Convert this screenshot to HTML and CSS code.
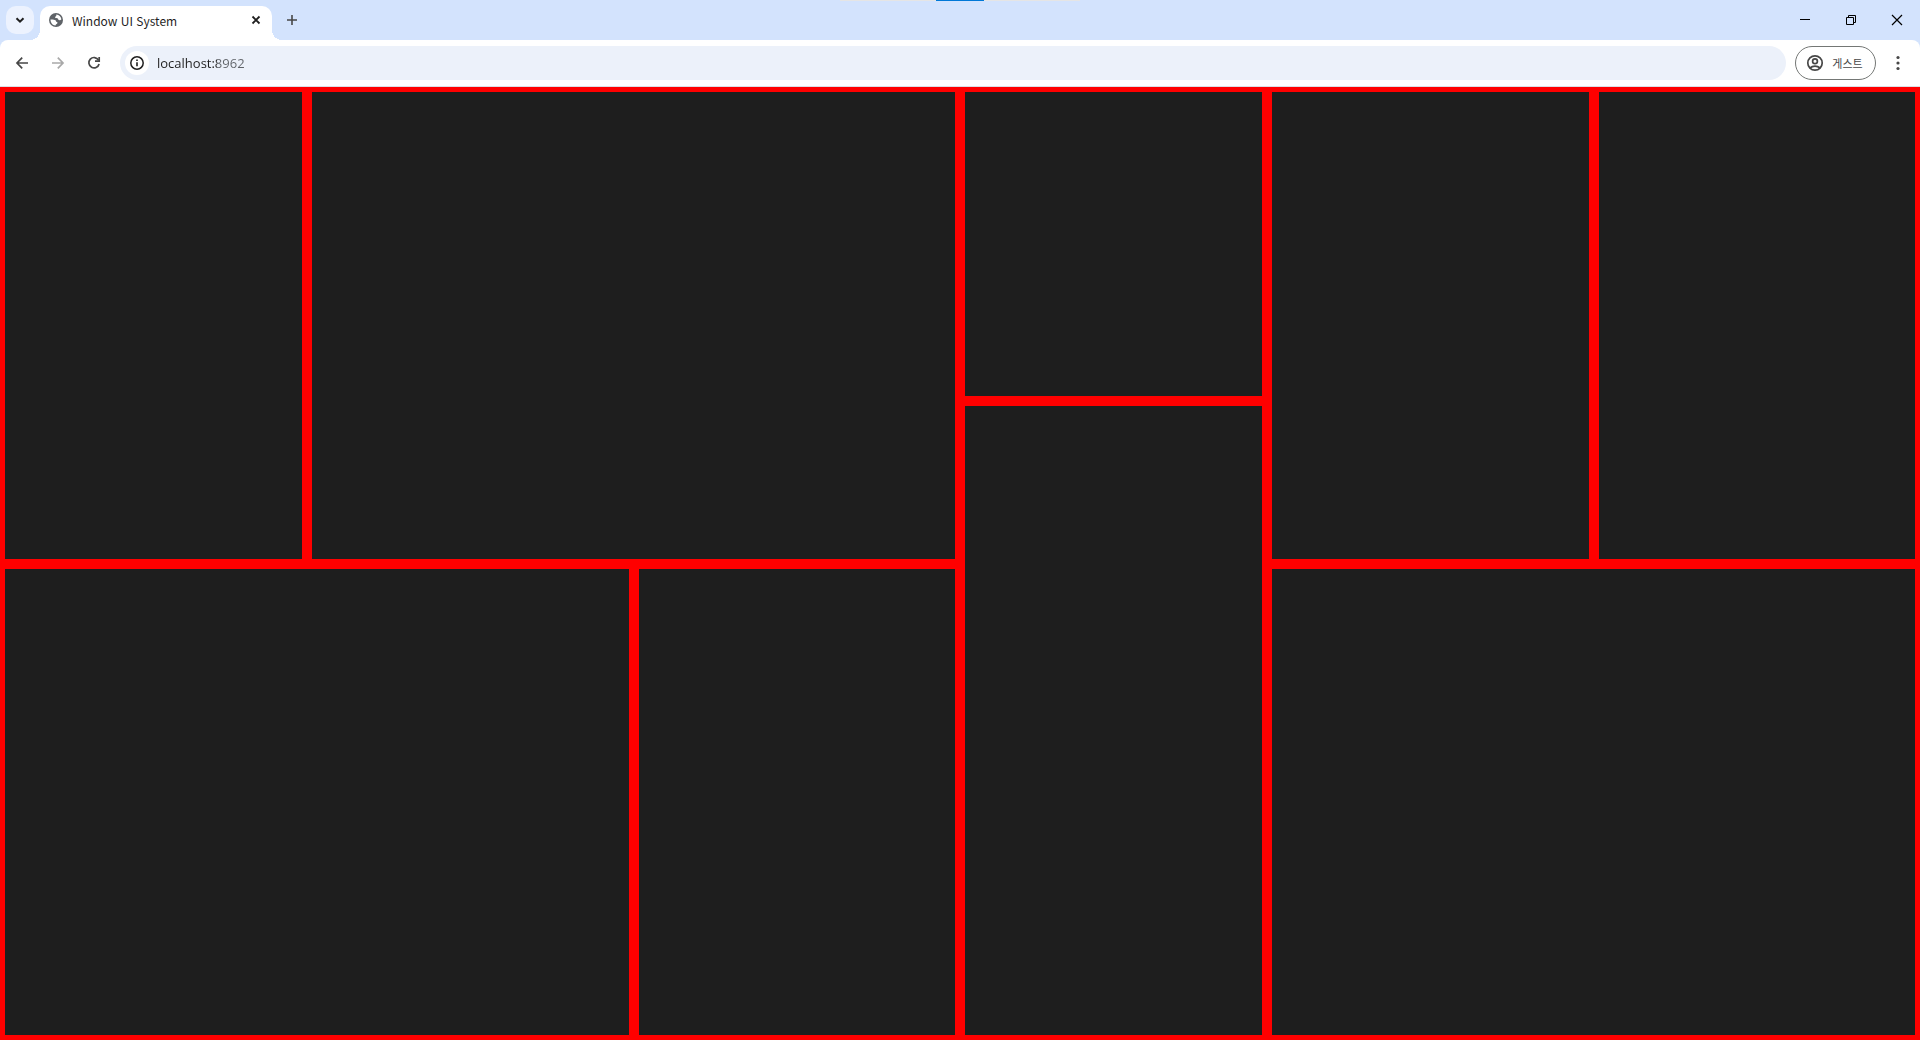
FILE: index.html
```html
<!DOCTYPE html>
<html lang="ko">
<head>
<meta charset="utf-8">
<meta name="viewport" content="width=device-width, initial-scale=1">
<title>Window UI System</title>
<link rel="stylesheet" href="styles.css">
</head>
<body>
<div class="snap-handle" aria-hidden="true"><span class="snap-grip"></span></div>
<header class="browser">
  <div class="tab-strip">
    <button class="tab-search" aria-label="Search tabs"><svg width="12" height="12" viewBox="0 0 12 12"><path d="M2.5 4.2 6 7.7l3.500-3.500" fill="none" stroke="#1f1f1f" stroke-width="2"/></svg></button>
    <div class="tab">
      <svg class="globe" width="16" height="16" viewBox="0 0 16 16"><circle cx="8" cy="8" r="7" fill="#5f6368"/><path d="M8.300 2.500c2.800.2 4.700 2.200 5.100 4.700-.8 1.200-1.900 1.100-2.800.9-.5-.5-.3-1.200-.8-1.500-.9-.5-2.400.1-2.700-1-.2-1 .9-1.100 1.200-1.800.1-.5-.1-.9 0-1.300zM2.500 7.500c1.500-.1 3.900-.1 5 .8.700.7.300 1.500 1.300 1.700.8.200.9.800.4 1.400-.6.700-1.500.6-1.700 2.100-2.900-.2-5-2.700-5-6z" fill="#fff"/></svg>
      <span class="tab-title">Window UI System</span>
      <button class="tab-close" aria-label="Close tab"><svg width="10" height="10" viewBox="0 0 10 10"><path d="m1.500 1.500 7 7m0-7-7 7" stroke="#1f1f1f" stroke-width="1.800"/></svg></button>
    </div>
    <button class="new-tab" aria-label="New tab"><svg width="12" height="12" viewBox="0 0 12 12"><path d="M6 1v10M1 6h10" stroke="#474747" stroke-width="1.600"/></svg></button>
    <div class="window-controls">
      <button class="control" aria-label="Minimize"><svg width="12" height="12" viewBox="0 0 12 12"><path d="M1 5.500h10" stroke="#000"/></svg></button>
      <button class="control" aria-label="Restore"><svg width="12" height="12" viewBox="0 0 12 12"><path d="M1.500 3.500h7v7h-7zM3.500 3.500v-2h7v7h-2" fill="none" stroke="#000"/></svg></button>
      <button class="control" aria-label="Close"><svg width="12" height="12" viewBox="0 0 12 12"><path d="m1 1 10 10m0-10L1 11" stroke="#000" stroke-width="1.200"/></svg></button>
    </div>
  </div>
  <div class="toolbar">
    <nav class="navigation" aria-label="Browser">
      <button class="icon-button" aria-label="Back"><svg width="16" height="16" viewBox="0 0 16 16"><path d="M14 8H3m5.200-5.300L3 8l5.200 5.300" fill="none" stroke="#474747" stroke-width="1.700"/></svg></button>
      <button class="icon-button" aria-label="Forward" disabled><svg width="16" height="16" viewBox="0 0 16 16"><path d="M2 8h11M7.800 2.700 13 8l-5.200 5.300" fill="none" stroke="#a9a9a9" stroke-width="1.700"/></svg></button>
      <button class="icon-button" aria-label="Reload"><svg width="16" height="16" viewBox="0 0 16 16"><path d="M12.500 5A5.200 5.200 0 1 0 13.100 9" fill="none" stroke="#474747" stroke-width="1.700"/><path d="M13.200 2v4.200H9" fill="none" stroke="#474747" stroke-width="1.700"/></svg></button>
    </nav>
    <div class="address">
      <button class="site-info" aria-label="Site information"><svg width="16" height="16" viewBox="0 0 16 16"><circle cx="8" cy="8" r="6.200" fill="none" stroke="#1f1f1f" stroke-width="1.500"/><path d="M8 7.200v4M8 4.500V6" stroke="#1f1f1f" stroke-width="1.600"/></svg></button>
      <input class="url" type="text" value="localhost:8962" aria-label="Address" spellcheck="false">
    </div>
    <button class="profile"><svg width="18" height="18" viewBox="0 0 18 18"><g fill="none" stroke="#474747" stroke-width="1.700"><circle cx="9" cy="9" r="7.200"/><circle cx="9" cy="7.300" r="2.400"/><path d="M4 14c2.700-2.400 7.300-2.400 10 0"/></g></svg><span>게스트</span></button>
    <button class="menu" aria-label="Menu"><svg width="4" height="16" viewBox="0 0 4 16"><g fill="#474747"><circle cx="2" cy="2.500" r="1.600"/><circle cx="2" cy="8" r="1.600"/><circle cx="2" cy="13.500" r="1.600"/></g></svg></button>
  </div>
</header>
<main class="workspace">
  <div class="rows">
    <div class="columns narrow-wide">
      <section class="pane"></section>
      <section class="pane"></section>
    </div>
    <div class="columns wide-narrow">
      <section class="pane"></section>
      <section class="pane"></section>
    </div>
  </div>
  <div class="columns narrow-wide">
    <div class="rows short-tall">
      <section class="pane"></section>
      <section class="pane"></section>
    </div>
    <div class="rows">
      <div class="columns">
        <section class="pane"></section>
        <section class="pane"></section>
      </div>
      <section class="pane"></section>
    </div>
  </div>
</main>
</body>
</html>
```

FILE: styles.css
```css
* { box-sizing: border-box; }

body {
  display: grid;
  grid-template-rows: auto minmax(0, 1fr);
  grid-template-columns: minmax(0, 1fr);
  height: 100vh;
  margin: 0;
  background: #d3e3fd;
  font-family: "Noto Sans CJK KR", "Noto Sans", sans-serif;
  font-size: 12px;
  color: #1f1f1f;
}

button {
  display: flex;
  align-items: center;
  justify-content: center;
  flex: none;
  padding: 0;
  border: 0;
  background: transparent;
  font: inherit;
  color: inherit;
}

svg { display: block; flex: none; }

/* Thin handle over the top edge of the window */
.snap-handle {
  position: absolute;
  top: 0;
  left: 50%;
  display: flex;
  justify-content: center;
  width: 240px;
  height: 1px;
  background: #e5e5e5;
  transform: translateX(-50%);
}

.snap-grip { width: 48px; background: #0078d7; }

/* Tabs */
.tab-strip {
  display: flex;
  align-items: flex-start;
  height: 40px;
  padding: 6px 0 0 6px;
}

.tab-search {
  width: 28px;
  height: 28px;
  border-radius: 10px;
  background: #ecf2fe;
}

.tab {
  position: relative;
  display: flex;
  align-items: center;
  width: 232px;
  height: 34px;
  margin-left: 6px;
  padding: 0 8px 6px;
  border-radius: 10px 10px 0 0;
  background: #fff;
}

.tab::before,
.tab::after {
  content: "";
  position: absolute;
  bottom: 0;
  width: 10px;
  height: 10px;
}

.tab::before {
  right: 100%;
  background: radial-gradient(circle at 0 0, transparent 10px, #fff 10px);
}

.tab::after {
  left: 100%;
  background: radial-gradient(circle at 100% 0, transparent 10px, #fff 10px);
}

.tab-title {
  flex: 1;
  margin-left: 8px;
  padding-top: 2px;
  line-height: 20px;
}

.tab-close { width: 16px; height: 16px; }

.new-tab {
  width: 28px;
  height: 28px;
  margin-left: 6px;
}

.window-controls { display: flex; margin-left: auto; }

.control { width: 46px; height: 28px; }

/* Toolbar */
.toolbar {
  display: flex;
  align-items: center;
  height: 47px;
  padding: 0 9px 0 5px;
  border-bottom: 1px solid #dcdfe5;
  border-radius: 8px 8px 0 0;
  background: #fff;
}

.navigation { display: flex; gap: 2px; }

.icon-button { width: 34px; height: 34px; }

.address {
  display: flex;
  flex: 1;
  align-items: center;
  height: 34px;
  margin: 0 9px;
  padding: 0 5px;
  border-radius: 17px;
  background: #ecf1fa;
}

.site-info {
  width: 24px;
  height: 24px;
  border-radius: 50%;
  background: #fff;
}

.url {
  flex: 1;
  min-width: 0;
  margin-left: 8px;
  padding: 0;
  border: 0;
  outline: 0;
  background: linear-gradient(to right, #1f1f1f 60px, #5f6368 60px);
  background-clip: text;
  color: transparent;
  font-family: "Open Sans", "Noto Sans CJK KR", sans-serif;
  font-size: 13px;
  line-height: 20px;
}

.profile {
  gap: 8px;
  width: 81px;
  height: 34px;
  padding-right: 2px;
  border: 1px solid #747775;
  border-radius: 17px;
  color: #474747;
  font-size: 11px;
}

.menu {
  width: 26px;
  height: 34px;
  margin-left: 9px;
}

/* Tiled panes */
.workspace,
.columns,
.rows {
  display: grid;
  min-width: 0;
  min-height: 0;
}

.workspace,
.columns { grid-template-columns: minmax(0, 1fr) minmax(0, 1fr); }

.rows { grid-template-rows: minmax(0, 1fr) minmax(0, 1fr); }

.narrow-wide { grid-template-columns: minmax(0, 32fr) minmax(0, 68fr); }
.wide-narrow { grid-template-columns: minmax(0, 66fr) minmax(0, 34fr); }
.short-tall { grid-template-rows: minmax(0, 33fr) minmax(0, 67fr); }

.pane {
  border: 5px solid #f00;
  background: #1e1e1e;
}
```
